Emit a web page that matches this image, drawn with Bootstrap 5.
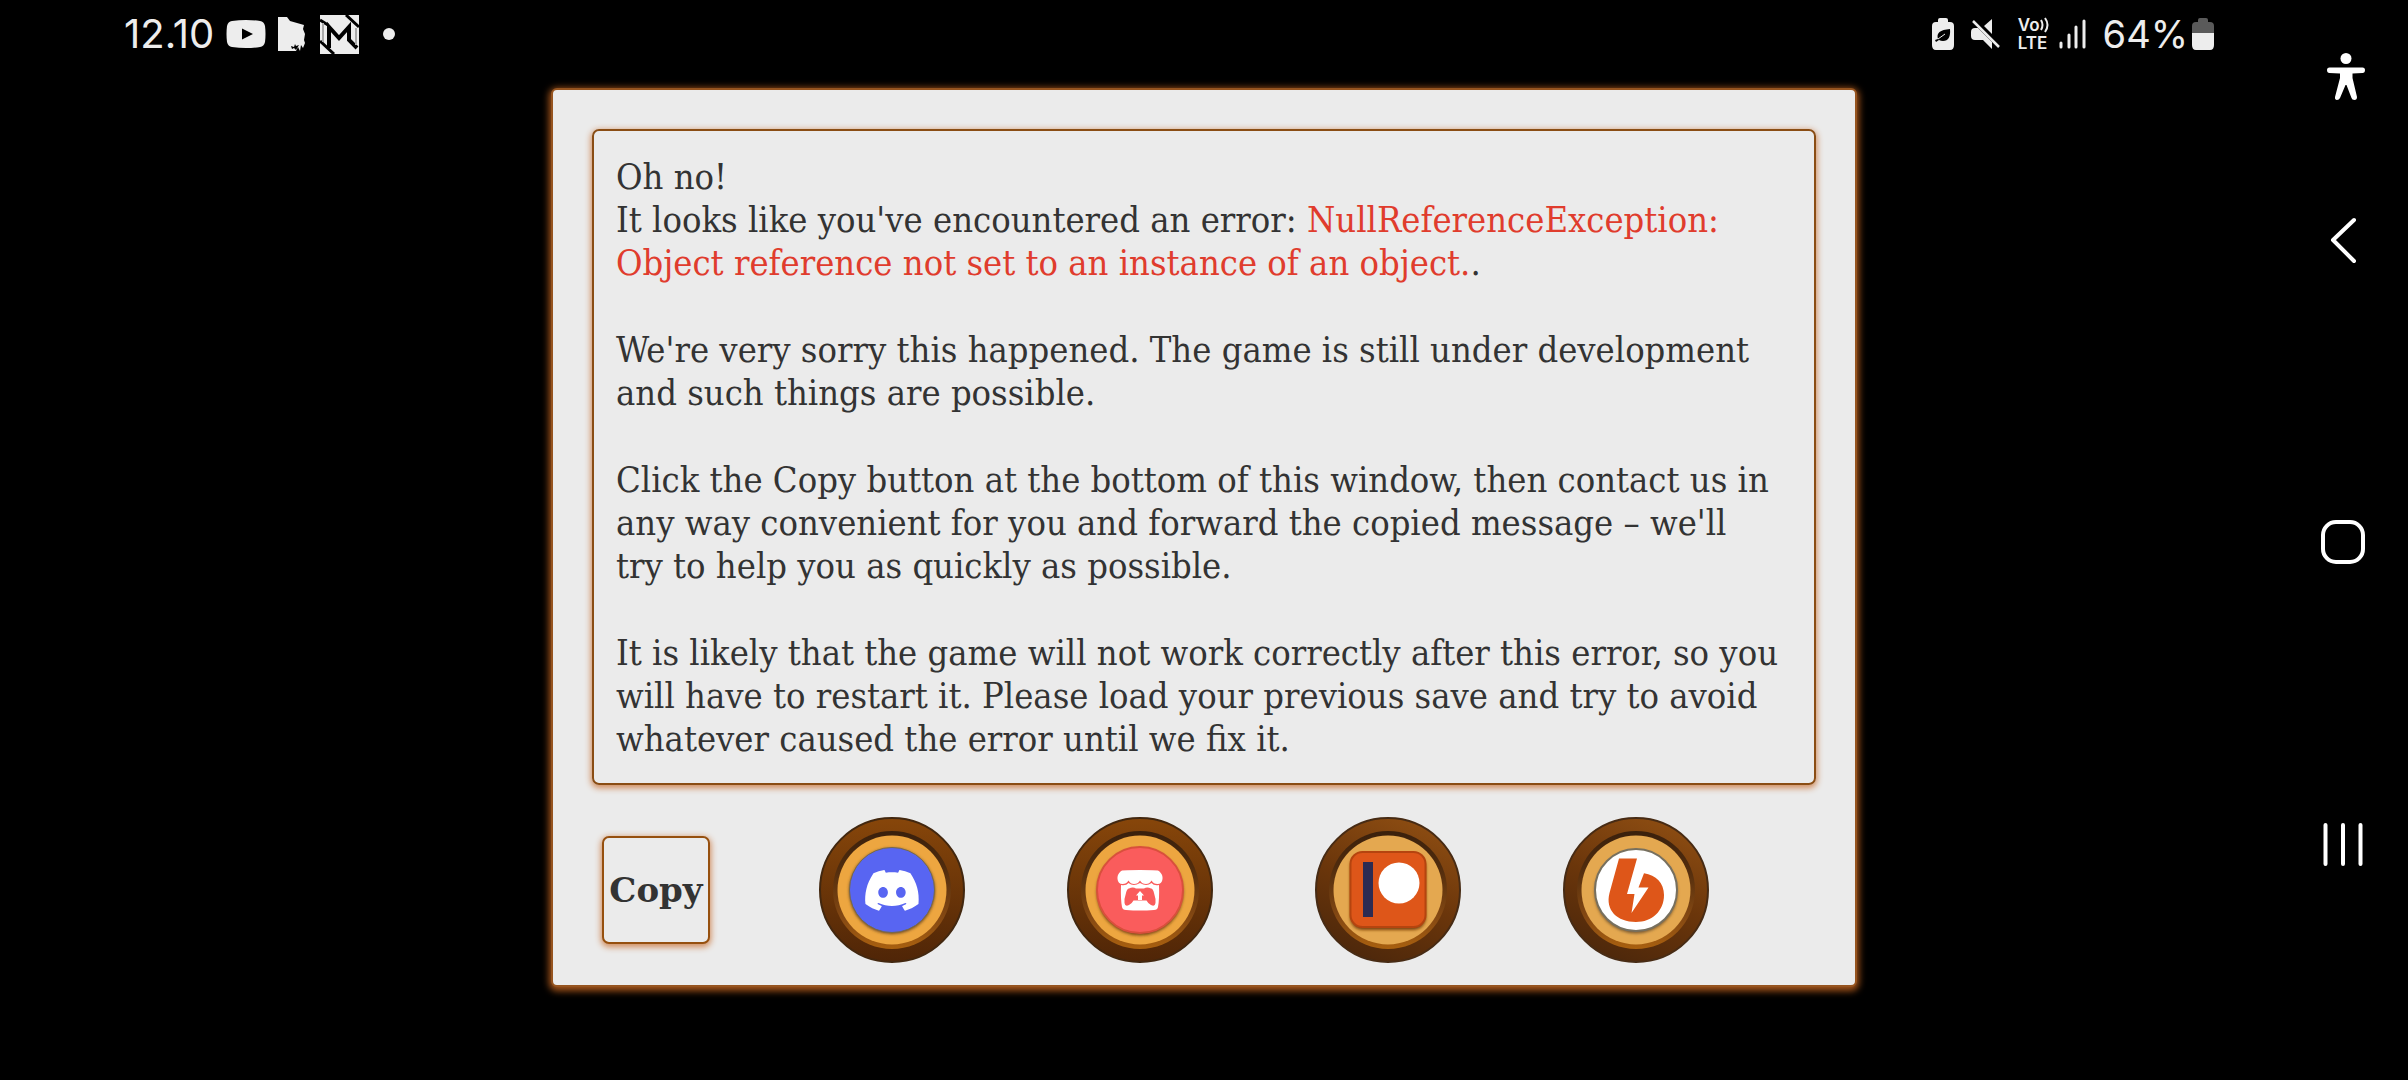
<!DOCTYPE html>
<html lang="en">
<head>
<meta charset="utf-8">
<meta name="viewport" content="width=device-width, initial-scale=1">
<title>Error report</title>
<link href="https://cdn.jsdelivr.net/npm/bootstrap@5.3.0/dist/css/bootstrap.min.css" rel="stylesheet">
<style>
  body { background: #000; }
  .screen { display: grid; grid-template-columns: 130px minmax(0, 1fr) 130px; grid-template-rows: auto 1fr; }
  .statusbar { grid-column: 2; height: 68px; padding: 0 64px 0 0; margin-left: -6px; color: #ededed; font-family: Inter, sans-serif; font-size: 38px; line-height: 68px; }
  .clock { font-size: 40px; margin-right: 12px; }
  .volte { font-size: 17px; line-height: 18px; font-weight: 600; }
  .stage { grid-column: 2; padding-top: 20px; }
  .rail { grid-column: 3; grid-row: 1 / span 2; padding-top: 52px; gap: 254px; }
  .rail-first { margin-bottom: -138px; }
  .dialog-panel { width: 1306px; max-width: 100%; background: #ebebeb; border: 2px solid #96541f; border-radius: 6px; box-shadow: 0 2px 7px 2px #a4541a; padding: 39px 39px 37px; }
  .message { font-family: "DejaVu Serif Condensed", "DejaVu Serif", serif; font-size: 36px; line-height: 43px; color: #333; border: 2px solid #8a4d14; border-radius: 7px; box-shadow: 0 2px 6px 1px #d08a5a; padding: 24px 20px 23px 22px; }
  .message p { margin-bottom: 44px; }
  .message p:last-child { margin-bottom: 0; }
  .err { color: #e03c2d; }
  .actions { gap: 102px; padding: 32px 0 0 10px; margin-bottom: -15px; }
  .copy-btn { width: 108px; height: 108px; margin-right: 7px; padding: 0; background: #ebebeb; color: #333; border: 2px solid #96500f; border-radius: 7px; box-shadow: 0 2px 6px 1px #d08a5a; font: bold 34px "DejaVu Serif", serif; }
  svg { display: block; flex: none; }
</style>
</head>
<body>
<svg width="0" height="0" class="position-absolute" aria-hidden="true">
  <defs>
    <linearGradient id="wood" x1="0" y1="0" x2="0" y2="1"><stop offset="0" stop-color="#87460a"/><stop offset="1" stop-color="#4f2507"/></linearGradient>
    <linearGradient id="rim" x1="0" y1="0" x2="0" y2="1"><stop offset="0" stop-color="#3a200c"/><stop offset=".3" stop-color="#4f2b0d"/><stop offset=".75" stop-color="#874a13"/><stop offset="1" stop-color="#a9600f"/></linearGradient>
    <linearGradient id="woodB" x1=".7" y1="0" x2=".3" y2="1"><stop offset="0" stop-color="#8d4d12"/><stop offset=".5" stop-color="#6b360b"/><stop offset="1" stop-color="#4c270b"/></linearGradient>
    <filter id="soft" x="-20%" y="-20%" width="140%" height="140%"><feGaussianBlur stdDeviation="1.5"/></filter>
    <g id="coin"><circle cx="73" cy="73" r="72" fill="url(#wood)" stroke="#42270f" stroke-width="2"/><circle cx="73" cy="73" r="59" fill="url(#rim)"/><circle cx="73" cy="73" r="54.5" fill="#eda640"/></g>
    <g id="coinB"><circle cx="73" cy="73" r="72" fill="url(#woodB)" stroke="#472b14" stroke-width="2"/><circle cx="73" cy="73" r="59" fill="url(#rim)"/><circle cx="73" cy="73" r="54.5" fill="#e4a850"/></g>
  </defs>
</svg>
<div class="screen min-vh-100">
  <header class="statusbar d-flex justify-content-between align-items-center">
    <div class="d-flex align-items-center">
      <span class="clock">12.10</span>
      <svg width="40" height="30" viewBox="0 0 40 30" fill="#ededed"><path d="M6 2Q20 0 34 2Q38 2.500 39 7Q40 15 39 23Q38 27.500 34 28Q20 30 6 28Q2 27.500 1 23Q0 15 1 7Q2 2.500 6 2Z"/><path d="M16 9.500L27 15L16 20.500Z" fill="#000"/></svg>
      <svg class="ms-2 me-2" width="38" height="38" viewBox="0 0 38 38"><path d="M4 2H13L16 6L23 8L30 10L29 14L31 19L30 25L31 28L29 33L27 30L26 36L24 32L22 36H4Z" fill="#ededed"/><path d="M17 31L20 32L21 29L22 31L25 30L22 35L20 33L18 34Z" fill="#000"/></svg>
      <svg width="39" height="39" viewBox="0 0 39 39"><rect width="39" height="39" fill="#ededed"/><g fill="none" stroke="#000"><path d="M0 5L8 10M0 26L14 39M26 0L39 12" stroke-width="3"/><path d="M9 33V12L19 23L29 12V25L37 33" stroke-width="4"/><path d="M3 8V27M36 13V30" stroke="#aaa" stroke-width="2"/></g></svg>
      <svg class="ms-4" width="12" height="12" viewBox="0 0 12 12"><circle cx="6" cy="6" r="6" fill="#ededed"/></svg>
    </div>
    <div class="d-flex align-items-center">
      <svg class="me-3" width="22" height="32" viewBox="0 0 22 32"><path d="M6 4V2Q6 0 8 0H14Q16 0 16 2V4H18Q22 4 22 8V27Q22 32 18 32H4Q0 32 0 27V8Q0 4 4 4Z" fill="#ededed"/><path d="M18 11Q19 23 11 23Q9 23 7 22L4 24L3 22L6 21Q3 12 18 11Z" fill="#000"/><path d="M6 21L13 16" stroke="#ededed" stroke-width="1"/></svg>
      <svg width="32" height="32" viewBox="0 0 32 32" fill="#ededed"><path d="M14 8L22 1V16ZM1 14Q1 10 5 10H8L22 24V31L13 22H5Q1 22 1 18Z"/><path d="M3 3L29 29" stroke="#ededed" stroke-width="2.500"/></svg>
      <div class="volte ms-3">
        <div class="d-flex align-items-center">Vo<svg width="9" height="16" viewBox="0 0 9 16" fill="none" stroke="#ededed" stroke-width="2"><path d="M1 3Q4 8 1 13M5 1Q10 8 5 15"/></svg></div>
        <div>LTE</div>
      </div>
      <svg class="ms-2" width="30" height="32" viewBox="0 0 30 32" stroke="#ededed" stroke-width="3" stroke-linecap="round"><path d="M4 25V29M12 17V29M19 9V29M27 3V29"/></svg>
      <span class="ms-3">64%</span>
      <svg class="ms-1" width="22" height="32" viewBox="0 0 22 32"><path d="M6 4V2Q6 0 8 0H14Q16 0 16 2V4H18Q22 4 22 8V15H0V8Q0 4 4 4Z" fill="#5a5a5a"/><path d="M0 15H22V27Q22 32 18 32H4Q0 32 0 27Z" fill="#ededed"/></svg>
    </div>
  </header>

  <main class="stage">
    <section class="dialog-panel mx-auto">
      <div class="message">
        <p>Oh no!<br>It looks like you've encountered an error: <span class="err">NullReferenceException:<br>Object reference not set to an instance of an object.</span>.</p>
        <p>We're very sorry this happened. The game is still under development<br>and such things are possible.</p>
        <p>Click the Copy button at the bottom of this window, then contact us in<br>any way convenient for you and forward the copied message – we'll<br>try to help you as quickly as possible.</p>
        <p>It is likely that the game will not work correctly after this error, so you<br>will have to restart it. Please load your previous save and try to avoid<br>whatever caused the error until we fix it.</p>
      </div>
      <div class="actions d-flex align-items-center">
        <button type="button" class="copy-btn">Copy</button>
        <a href="#discord" aria-label="Discord">
          <svg width="146" height="146" viewBox="0 0 146 146"><use href="#coin"/><circle cx="73" cy="74" r="43" fill="#6d4a20" filter="url(#soft)"/><circle cx="73" cy="73" r="42.500" fill="#5865f2" stroke="#75694f"/><path transform="translate(46.200 46.600) scale(2.230)" fill="#fff" d="M20.317 4.3698a19.7913 19.7913 0 00-4.8851-1.5152.0741.0741 0 00-.0785.0371c-.211.3753-.4447.8648-.6083 1.2495-1.8447-.2762-3.68-.2762-5.4868 0-.1636-.3933-.4058-.8742-.6177-1.2495a.077.077 0 00-.0785-.037 19.7363 19.7363 0 00-4.8852 1.515.0699.0699 0 00-.0321.0277C.5334 9.0458-.319 13.5799.0992 18.0578a.0824.0824 0 00.0312.0561c2.0528 1.5076 4.0413 2.4228 5.9929 3.0294a.0777.0777 0 00.0842-.0276c.4616-.6304.8731-1.2952 1.226-1.9942a.076.076 0 00-.0416-.1057c-.6528-.2476-1.2743-.5495-1.8722-.8923a.077.077 0 01-.0076-.1277c.1258-.0943.2517-.1923.3718-.2914a.0743.0743 0 01.0776-.0105c3.9278 1.7933 8.18 1.7933 12.0614 0a.0739.0739 0 01.0785.0095c.1202.099.246.1981.3728.2924a.077.077 0 01-.0066.1276 12.2986 12.2986 0 01-1.873.8914.0766.0766 0 00-.0407.1067c.3604.698.7719 1.3628 1.225 1.9932a.076.076 0 00.0842.0286c1.961-.6067 3.9495-1.5219 6.0023-3.0294a.077.077 0 00.0313-.0552c.5004-5.177-.8382-9.6739-3.5485-13.6604a.061.061 0 00-.0312-.0286zM8.02 15.3312c-1.1825 0-2.1569-1.0857-2.1569-2.419 0-1.3332.9555-2.4189 2.157-2.4189 1.2108 0 2.1757 1.0952 2.1568 2.419 0 1.3332-.9555 2.4189-2.1569 2.4189zm7.9748 0c-1.1825 0-2.1569-1.0857-2.1569-2.419 0-1.3332.9554-2.4189 2.1569-2.4189 1.2108 0 2.1757 1.0952 2.1568 2.419 0 1.3332-.946 2.4189-2.1568 2.4189Z"/></svg>
        </a>
        <a href="#itch" aria-label="itch.io">
          <svg width="146" height="146" viewBox="0 0 146 146"><use href="#coin"/><circle cx="73" cy="75" r="43.500" fill="#7d4a18" filter="url(#soft)"/><circle cx="73" cy="73" r="43" fill="#fa5c5c" stroke="#d94f3c" stroke-width="2"/>
            <path fill="#fff" d="M55 53.500Q57 53 73 53Q89 53 91 53.500Q95 56 95.500 60V62Q95 67 90.500 67Q86.500 67 84.500 63.500Q82.500 67 79 67Q75 67 73 63.500Q71 67 67 67Q63.500 67 61.500 63.500Q59.500 67 55.500 67Q51 67 50.500 62V60Q51 56 55 53.500Z"/>
            <path fill="#fff" d="M54 68Q59 69 61.500 66Q66.500 70 73 66Q79.500 70 84.500 66Q87 69 92 68Q92.500 82 91 90Q90.500 93 87 93Q73 94 59 93Q55.500 93 55 90Q53.500 82 54 68Z"/>
            <path fill="#fa5c5c" d="M62 71.500Q66 69.500 69 71.500H77Q80 69.500 84 71.500Q86 71.500 87 76Q89 82 88.500 86Q88 90 84 88Q81 86.500 79.500 83.500H66.500Q65 86.500 62 88Q58 90 57.500 86Q57 82 59 76Q60 71.500 62 71.500Z"/>
            <path fill="#fff" d="M73 74L77 78.500H75V83H71V78.500H69Z"/></svg>
        </a>
        <a href="#patreon" aria-label="Patreon">
          <svg width="146" height="146" viewBox="0 0 146 146"><use href="#coinB"/><rect x="35" y="37" width="76" height="76" rx="13" fill="#7d4310" filter="url(#soft)"/><rect x="35.500" y="35" width="75" height="75" rx="12" fill="#de5619" stroke="#b5440f" stroke-width="2"/><path fill="#2c2b52" d="M48 45H58V100H48Z"/><circle cx="84" cy="66" r="20.500" fill="#fff"/></svg>
        </a>
        <a href="#boosty" aria-label="Boosty">
          <svg width="146" height="146" viewBox="0 0 146 146"><use href="#coinB"/><circle cx="73" cy="75" r="41.500" fill="#7d5c30" filter="url(#soft)"/><circle cx="73" cy="73" r="41" fill="#fff" stroke="#77705f" stroke-width="2"/><path fill="#de5619" d="M56 41.500H74L64 77H71.500L68.500 96L85.500 70.500H75.500L81 56.300C93 58 101 66 101 78C101 94 89 105 73 105C54 105 42 93 46.500 76Z"/></svg>
        </a>
      </div>
    </section>
  </main>

  <nav class="rail d-flex flex-column align-items-center" aria-label="System navigation">
    <a class="rail-first" href="#accessibility" aria-label="Accessibility"><svg width="48" height="48" viewBox="0 0 48 48" fill="#fff"><circle cx="27" cy="6.500" r="5.500"/><path d="M10.500 15.500H43.500Q46 15.500 46 18Q46 21 43.500 21L33.500 21.500V26L38 45Q38 48 35.500 48Q33 48 32.500 46L27.500 33H26.500L21 46Q20 48 18 48Q15.500 47.500 16 45L21 26V21.500L10.500 21Q8 21 8 18Q8 15.500 10.500 15.500Z"/></svg></a>
    <a href="#back" aria-label="Back"><svg width="48" height="48" viewBox="0 0 48 48" fill="none" stroke="#fff" stroke-width="4" stroke-linecap="round" stroke-linejoin="round"><path d="M35 4L14 24L35 45"/></svg></a>
    <a href="#home" aria-label="Home"><svg width="48" height="48" viewBox="0 0 48 48" fill="none" stroke="#fff" stroke-width="4"><rect x="4" y="4" width="40" height="40" rx="13"/></svg></a>
    <a href="#recents" aria-label="Recent apps"><svg width="48" height="48" viewBox="0 0 48 48" stroke="#fff" stroke-width="4" stroke-linecap="round"><path d="M6.500 5V44M24 5V44M41.500 5V44"/></svg></a>
  </nav>
</div>
<script src="https://cdn.jsdelivr.net/npm/bootstrap@5.3.0/dist/js/bootstrap.bundle.min.js"></script>
</body>
</html>
